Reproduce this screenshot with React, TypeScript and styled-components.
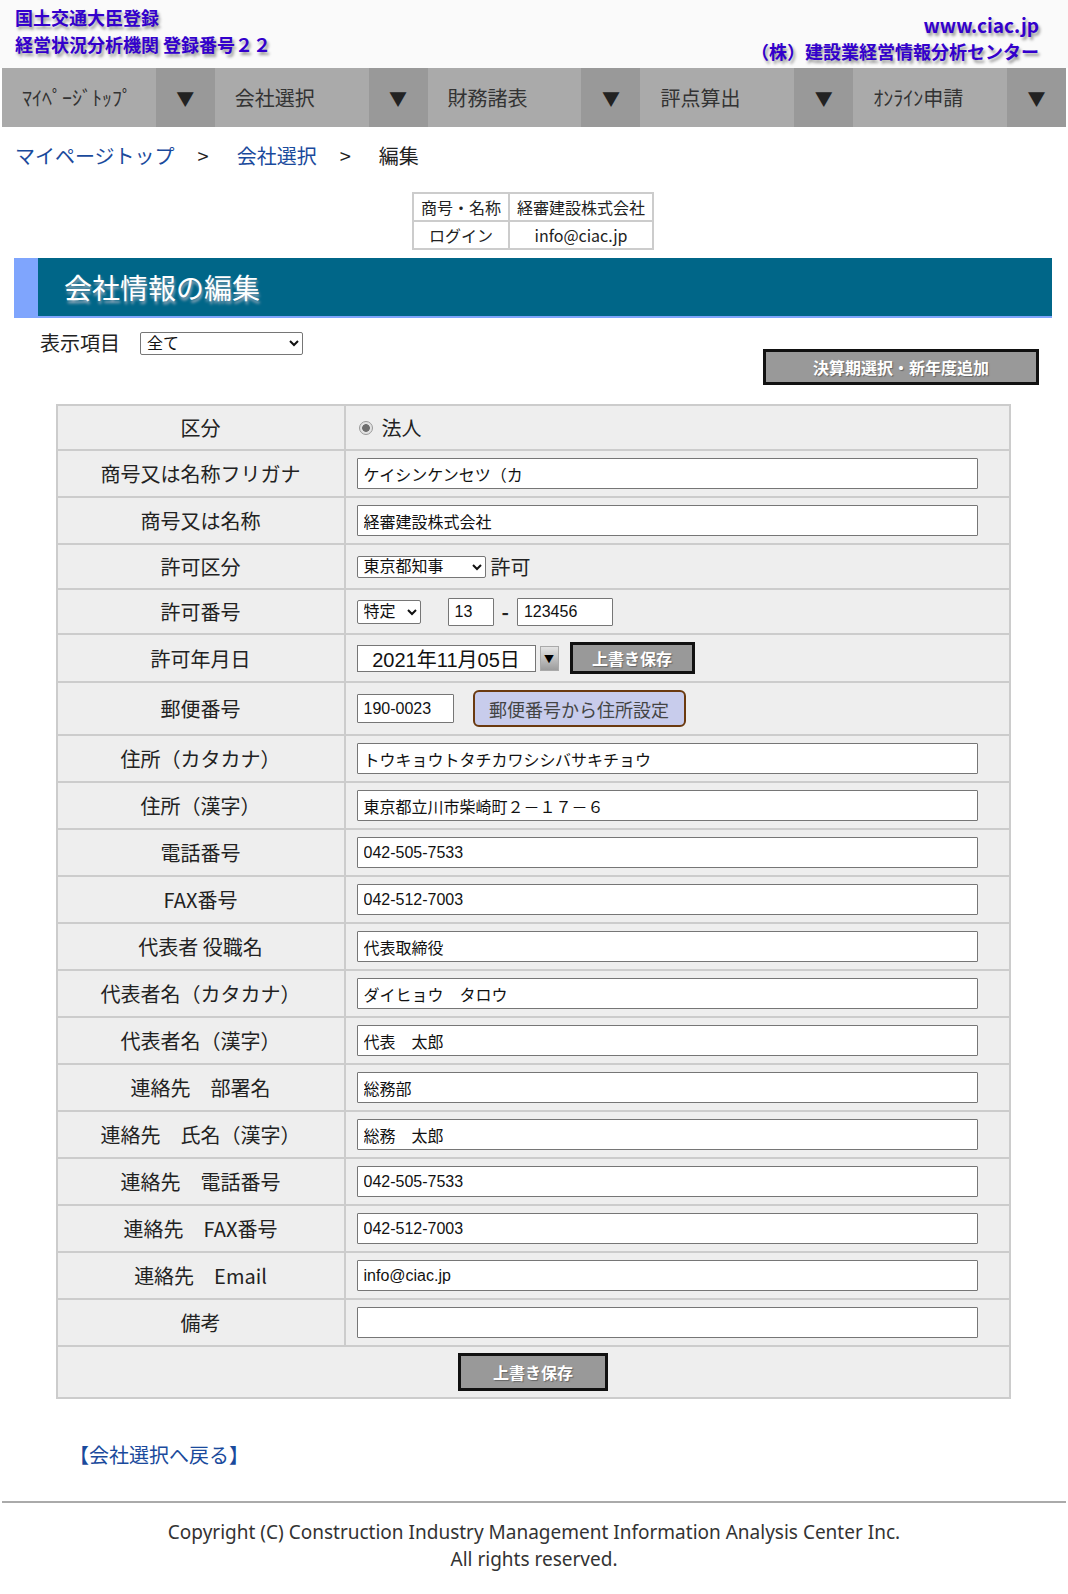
import React from "react";
import styled, { createGlobalStyle } from "styled-components";

const GlobalStyle = createGlobalStyle`
  html, body { margin: 0; padding: 0; background: #fff; }
  body {
    font-family: "Noto Sans CJK JP", "Noto Sans", sans-serif;
    color: #222;
  }
  * { box-sizing: border-box; }
`;

const Page = styled.div`
  width: 1068px;
`;

const Header = styled.header`
  height: 68px;
  background: #fafafa;
  display: flex;
  justify-content: space-between;
  padding: 4px 29px 0 15px;
`;

const HeaderBlock = styled.div<{ $right?: boolean }>`
  display: flex;
  flex-direction: column;
  align-items: ${(p) => (p.$right ? "flex-end" : "flex-start")};
  padding-top: ${(p) => (p.$right ? "7px" : "0")};
`;

const HeaderLine = styled.div<{ $size?: number }>`
  font-size: ${(p) => p.$size ?? 18}px;
  line-height: 27px;
  font-weight: bold;
  color: #3300cc;
  text-shadow: 2px 3px 3px #9a9a9a;
  white-space: nowrap;
`;

const Nav = styled.nav`
  display: flex;
  margin: 0 2px;
  height: 59px;
`;

const NavItem = styled.div`
  flex: 1;
  display: flex;
`;

const NavLabel = styled.div`
  flex: 1;
  background: #aaaaaa;
  color: #333;
  font-size: 20px;
  display: flex;
  align-items: center;
  padding-left: 20px;
  white-space: nowrap;
`;

const NavArrow = styled.div`
  width: 59px;
  background: #999999;
  color: #222;
  font-size: 18px;
  display: flex;
  align-items: center;
  justify-content: center;
`;

const Breadcrumb = styled.div`
  padding: 14px 0 0 15px;
  font-size: 20px;
  line-height: 30px;
  display: flex;
  align-items: center;
`;

const Crumb = styled.a`
  color: #1a4a9c;
  text-decoration: none;
`;

const CrumbSep = styled.span`
  margin: 0 28px 0 23px;
  color: #222;
`;

const CrumbCurrent = styled.span`
  color: #222;
`;

const Content = styled.main`
  margin: 0 16px 0 14px;
`;

const InfoTable = styled.table`
  margin: 21px auto 0;
  border-collapse: collapse;
  font-size: 16px;
`;

const InfoCell = styled.td`
  border: 2px solid #cccccc;
  padding: 0 7px;
  height: 28px;
  line-height: 24px;
  text-align: center;
  white-space: nowrap;
  color: #222;
`;

const TitleBar = styled.h1`
  margin: 8px 0 0;
  height: 60px;
  background: #006688;
  border-left: 24px solid #7fa5fd;
  border-bottom: 2px solid #7fa5fd;
  color: #fff;
  font-size: 28px;
  font-weight: normal;
  padding-left: 26px;
  display: flex;
  align-items: center;
  text-shadow: 1px 3px 3px #9ab;
`;

const Controls = styled.div`
  display: flex;
  justify-content: space-between;
  align-items: flex-start;
`;

const FilterGroup = styled.div`
  display: flex;
  align-items: center;
  padding: 10px 0 0 26px;
  gap: 20px;
  font-size: 20px;
  line-height: 30px;
`;

const FilterSelect = styled.select`
  width: 163px;
  height: 23px;
  font-size: 16px;
  line-height: normal;
  font-family: "Liberation Sans", "Noto Sans CJK JP", sans-serif;
  border: 1px solid #767676;
  border-radius: 2px;
  background: #fff;
  padding: 0 2px;
  color: #111;
`;

const GrayButton = styled.button<{ $w: number; $h: number }>`
  width: ${(p) => p.$w}px;
  height: ${(p) => p.$h}px;
  background: #999999;
  border: 3px solid #111;
  color: #fff;
  font-weight: bold;
  font-size: 16px;
  font-family: "Noto Sans CJK JP", sans-serif;
  text-shadow: 1px 1px 1px #666;
  padding: 0;
  cursor: pointer;
`;

const TopButton = styled(GrayButton)`
  margin: 31px 13px 0 0;
`;

const FormTable = styled.table`
  width: 955px;
  margin: 19px auto 0;
  border-collapse: collapse;
  background: #eeeeee;
  border: 2px solid #cccccc;
`;

const LabelCell = styled.th`
  width: 288px;
  border: 2px solid #cccccc;
  font-size: 20px;
  font-weight: normal;
  color: #222;
  text-align: center;
  padding: 7px 4px;
  line-height: 29px;
  white-space: pre;
`;

const ValueCell = styled.td`
  border: 2px solid #cccccc;
  padding: 7px 11px;
  line-height: 29px;
  font-size: 20px;
`;

const Inline = styled.div`
  display: flex;
  align-items: center;
`;

const TextInput = styled.input<{ $w?: number; $h?: number }>`
  display: block;
  width: ${(p) => (p.$w ? `${p.$w}px` : "621px")};
  height: ${(p) => p.$h ?? 31}px;
  border: 1px solid #767676;
  background: #fff;
  font-size: 16px;
  font-family: "Liberation Sans", "Noto Sans CJK JP", sans-serif;
  color: #111;
  padding: 0 6px;
  margin: 0;
  border-radius: 1px;
`;

const SmallSelect = styled.select<{ $w: number; $h: number }>`
  width: ${(p) => p.$w}px;
  height: ${(p) => p.$h}px;
  font-size: 16px;
  line-height: normal;
  font-family: "Liberation Sans", "Noto Sans CJK JP", sans-serif;
  border: 1px solid #767676;
  border-radius: 2px;
  background: #fff;
  padding: 0 2px;
  color: #111;
`;

const Radio = styled.input`
  appearance: none;
  margin: 0 9px 0 2px;
  width: 14px;
  height: 14px;
  border-radius: 50%;
  border: 1px solid #9a9a9a;
  background: radial-gradient(circle, #6e6e6e 0 3.5px, #e2e2e2 4.2px);
`;

const PlainText = styled.span<{ $ml?: number; $mr?: number; $bold?: boolean }>`
  margin-left: ${(p) => p.$ml ?? 0}px;
  margin-right: ${(p) => p.$mr ?? 0}px;
  font-weight: ${(p) => (p.$bold ? "bold" : "normal")};
  font-size: 20px;
  color: #222;
`;

const DateInput = styled.input`
  width: 179px;
  height: 27px;
  border: 1px solid #767676;
  background: #fff;
  font-size: 20px;
  font-family: "Liberation Sans", "Noto Sans CJK JP", sans-serif;
  text-align: center;
  color: #111;
  padding: 0;
`;

const DateDrop = styled.span`
  width: 19px;
  height: 25px;
  margin-left: 4px;
  background: linear-gradient(#e4e4e4, #9c9c9c);
  border: 1px solid #aaa;
  display: flex;
  align-items: center;
  justify-content: center;
  font-size: 10px;
  color: #000;
`;

const SmallSave = styled(GrayButton)`
  margin-left: 11px;
`;

const PostalButton = styled.button`
  margin-left: 19px;
  width: 213px;
  height: 37px;
  background: #c8ccec;
  border: 2px solid #6b3a10;
  border-radius: 6px;
  font-size: 18px;
  color: #444;
  font-family: "Noto Sans CJK JP", sans-serif;
  padding: 0;
`;

const ButtonCell = styled.td`
  border: 2px solid #cccccc;
  padding: 6px 0;
  text-align: center;
`;

const BackLink = styled.a`
  display: inline-block;
  margin: 41px 0 0 55px;
  font-size: 20px;
  line-height: 30px;
  color: #1a4a9c;
  text-decoration: none;
`;

const Footer = styled.footer`
  margin: 31px 2px 0;
  border-top: 2px solid #aaaaaa;
  padding: 16px 0 21px;
  text-align: center;
  font-size: 19px;
  line-height: 27px;
  color: #333;
  font-family: "Noto Sans", "Noto Sans CJK JP", sans-serif;
`;

const navItems = ["ﾏｲﾍﾟｰｼﾞﾄｯﾌﾟ", "会社選択", "財務諸表", "評点算出", "ｵﾝﾗｲﾝ申請"];

const textRows: [string, string][] = [
  ["住所（カタカナ）", "トウキョウトタチカワシシバサキチョウ"],
  ["住所（漢字）", "東京都立川市柴崎町２－１７－６"],
  ["電話番号", "042-505-7533"],
  ["FAX番号", "042-512-7003"],
  ["代表者 役職名", "代表取締役"],
  ["代表者名（カタカナ）", "ダイヒョウ　タロウ"],
  ["代表者名（漢字）", "代表　太郎"],
  ["連絡先　部署名", "総務部"],
  ["連絡先　氏名（漢字）", "総務　太郎"],
  ["連絡先　電話番号", "042-505-7533"],
  ["連絡先　FAX番号", "042-512-7003"],
  ["連絡先　Email", "info@ciac.jp"],
  ["備考", ""],
];

export default function App() {
  return (
    <Page>
      <GlobalStyle />
      <Header>
        <HeaderBlock>
          <HeaderLine>国土交通大臣登録</HeaderLine>
          <HeaderLine>経営状況分析機関 登録番号２２</HeaderLine>
        </HeaderBlock>
        <HeaderBlock $right>
          <HeaderLine $size={19}>www.ciac.jp</HeaderLine>
          <HeaderLine>（株）建設業経営情報分析センター</HeaderLine>
        </HeaderBlock>
      </Header>
      <Nav>
        {navItems.map((n) => (
          <NavItem key={n}>
            <NavLabel>{n}</NavLabel>
            <NavArrow>▼</NavArrow>
          </NavItem>
        ))}
      </Nav>
      <Breadcrumb>
        <Crumb href="#">マイページトップ</Crumb>
        <CrumbSep>&gt;</CrumbSep>
        <Crumb href="#">会社選択</Crumb>
        <CrumbSep>&gt;</CrumbSep>
        <CrumbCurrent>編集</CrumbCurrent>
      </Breadcrumb>
      <Content>
        <InfoTable>
          <tbody>
            <tr>
              <InfoCell>商号・名称</InfoCell>
              <InfoCell>経審建設株式会社</InfoCell>
            </tr>
            <tr>
              <InfoCell>ログイン</InfoCell>
              <InfoCell>info@ciac.jp</InfoCell>
            </tr>
          </tbody>
        </InfoTable>
        <TitleBar>会社情報の編集</TitleBar>
        <Controls>
          <FilterGroup>
            <span>表示項目</span>
            <FilterSelect defaultValue="all">
              <option value="all">全て</option>
            </FilterSelect>
          </FilterGroup>
          <TopButton $w={276} $h={36}>決算期選択・新年度追加</TopButton>
        </Controls>
        <FormTable>
          <tbody>
            <tr>
              <LabelCell>区分</LabelCell>
              <ValueCell>
                <Inline>
                  <Radio type="radio" checked readOnly />
                  <PlainText>法人</PlainText>
                </Inline>
              </ValueCell>
            </tr>
            <tr>
              <LabelCell>商号又は名称フリガナ</LabelCell>
              <ValueCell>
                <TextInput defaultValue="ケイシンケンセツ（カ" />
              </ValueCell>
            </tr>
            <tr>
              <LabelCell>商号又は名称</LabelCell>
              <ValueCell>
                <TextInput defaultValue="経審建設株式会社" />
              </ValueCell>
            </tr>
            <tr>
              <LabelCell>許可区分</LabelCell>
              <ValueCell>
                <Inline>
                  <SmallSelect $w={129} $h={22} defaultValue="tokyo">
                    <option value="tokyo">東京都知事</option>
                  </SmallSelect>
                  <PlainText $ml={5}>許可</PlainText>
                </Inline>
              </ValueCell>
            </tr>
            <tr>
              <LabelCell>許可番号</LabelCell>
              <ValueCell>
                <Inline>
                  <SmallSelect $w={64} $h={24} defaultValue="t">
                    <option value="t">特定</option>
                  </SmallSelect>
                  <TextInput $w={46} $h={28} defaultValue="13" style={{ marginLeft: 27 }} />
                  <PlainText $ml={8} $mr={8} $bold>
                    -
                  </PlainText>
                  <TextInput $w={96} $h={28} defaultValue="123456" />
                </Inline>
              </ValueCell>
            </tr>
            <tr>
              <LabelCell>許可年月日</LabelCell>
              <ValueCell>
                <Inline>
                  <DateInput defaultValue="2021年11月05日" />
                  <DateDrop>▼</DateDrop>
                  <SmallSave $w={125} $h={32}>上書き保存</SmallSave>
                </Inline>
              </ValueCell>
            </tr>
            <tr>
              <LabelCell>郵便番号</LabelCell>
              <ValueCell>
                <Inline>
                  <TextInput $w={97} $h={29} defaultValue="190-0023" />
                  <PostalButton>郵便番号から住所設定</PostalButton>
                </Inline>
              </ValueCell>
            </tr>
            {textRows.map(([label, value]) => (
              <tr key={label}>
                <LabelCell>{label}</LabelCell>
                <ValueCell>
                  <TextInput defaultValue={value} />
                </ValueCell>
              </tr>
            ))}
            <tr>
              <ButtonCell colSpan={2}>
                <GrayButton $w={150} $h={38}>上書き保存</GrayButton>
              </ButtonCell>
            </tr>
          </tbody>
        </FormTable>
        <BackLink href="#">【会社選択へ戻る】</BackLink>
      </Content>
      <Footer>
        Copyright (C) Construction Industry Management Information Analysis Center Inc.
        <br />
        All rights reserved.
      </Footer>
    </Page>
  );
}
